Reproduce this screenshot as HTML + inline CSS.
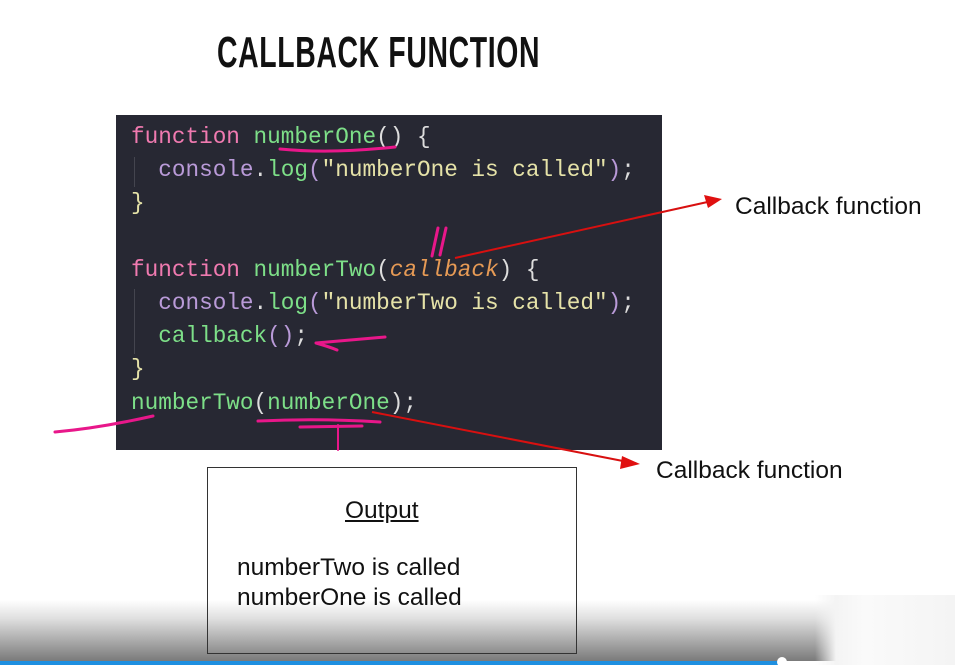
<!DOCTYPE html>
<html><head><meta charset="utf-8">
<style>
html,body{margin:0;padding:0;}
body{width:955px;height:665px;position:relative;overflow:hidden;background:#fff;font-family:"Liberation Sans",sans-serif;}
.title{position:absolute;left:217px;top:28px;font-weight:bold;font-size:44px;letter-spacing:1px;color:#111;transform:scaleX(0.645);transform-origin:0 0;white-space:nowrap;}
.code{position:absolute;left:116px;top:115px;width:546px;height:335px;background:#272833;}
.code pre{margin:0;position:absolute;left:15px;top:6px;font-family:"Liberation Mono",monospace;font-size:22.7px;line-height:33.2px;color:#e8e8e0;}
.k{color:#f07ab0}.f{color:#7ddf88}.p{color:#b99ad8}.s{color:#e5e2a8}.a{color:#e69a55;font-style:italic}.w{color:#ddd}
.guide{position:absolute;left:18px;width:1px;background:#44454f;}
.lbl{position:absolute;font-size:24.5px;color:#111;white-space:nowrap;}
.out{position:absolute;left:207px;top:467px;width:368px;height:185px;border:1.5px solid #333;}
.grad{position:absolute;left:0;top:600px;width:955px;height:61px;background:linear-gradient(#fff,#e0e0e0 30%,#7a7a7a);}
.bar{position:absolute;left:0;top:661px;width:782px;height:4px;background:#1e8fe0;}
.rt{position:absolute;left:815px;top:595px;width:140px;height:70px;background:linear-gradient(90deg,rgba(240,240,240,0),#f4f4f4 15%,#fafafa 35%,#f4f4f4);}
</style></head><body>
<div class="grad"></div>
<div class="rt"></div>
<div class="title">CALLBACK FUNCTION</div>
<div class="code">
<div class="guide" style="top:42px;height:30px"></div>
<div class="guide" style="top:174px;height:65px"></div>
<pre><span class="k">function</span> <span class="f">numberOne</span><span class="w">()</span> <span class="w">{</span>
  <span class="p">console</span><span class="w">.</span><span class="f">log</span><span class="p">(</span><span class="s">"numberOne is called"</span><span class="p">)</span><span class="w">;</span>
<span class="s">}</span>

<span class="k">function</span> <span class="f">numberTwo</span><span class="w">(</span><span class="a">callback</span><span class="w">)</span> <span class="w">{</span>
  <span class="p">console</span><span class="w">.</span><span class="f">log</span><span class="p">(</span><span class="s">"numberTwo is called"</span><span class="p">)</span><span class="w">;</span>
  <span class="f">callback</span><span class="p">()</span><span class="w">;</span>
<span class="s">}</span>
<span class="f">numberTwo</span><span class="w">(</span><span class="f">numberOne</span><span class="w">);</span></pre>
</div>
<svg style="position:absolute;left:0;top:0" width="955" height="665">
<g stroke="#e8178a" stroke-width="3" fill="none" stroke-linecap="round">
<path d="M280 149 Q330 154 395 147"/>
<path d="M316 343 L385 337 M316 343 Q330 347 337 350"/>
<path d="M432 256 L438 228 M440 255 L446 228"/>
<path d="M55 432 Q100 428 153 416"/>
<path d="M258 421 Q320 418 380 422 M300 427 L362 426"/>
<path d="M338 425 L338 450" stroke-width="2"/>
</g>
<g stroke="#d81010" stroke-width="2" fill="none">
<path d="M455 258 L712 201"/>
<path d="M372 412 L628 462"/>
</g>
<polygon points="722,199 704,195 708,208" fill="#e01010"/>
<polygon points="640,464 622,456 620,469" fill="#e01010"/>
</svg>
<div class="lbl" style="left:735px;top:193px">Callback function</div>
<div class="lbl" style="left:656px;top:457px">Callback function</div>
<div class="out">
<div class="lbl" style="left:137px;top:29px;text-decoration:underline">Output</div>
<div class="lbl" style="left:29px;top:86px">numberTwo is called</div>
<div class="lbl" style="left:29px;top:116px">numberOne is called</div>
</div>
<div class="bar"></div>
<div style="position:absolute;left:777px;top:657px;width:10px;height:10px;border-radius:50%;background:#fff"></div>
</body></html>
